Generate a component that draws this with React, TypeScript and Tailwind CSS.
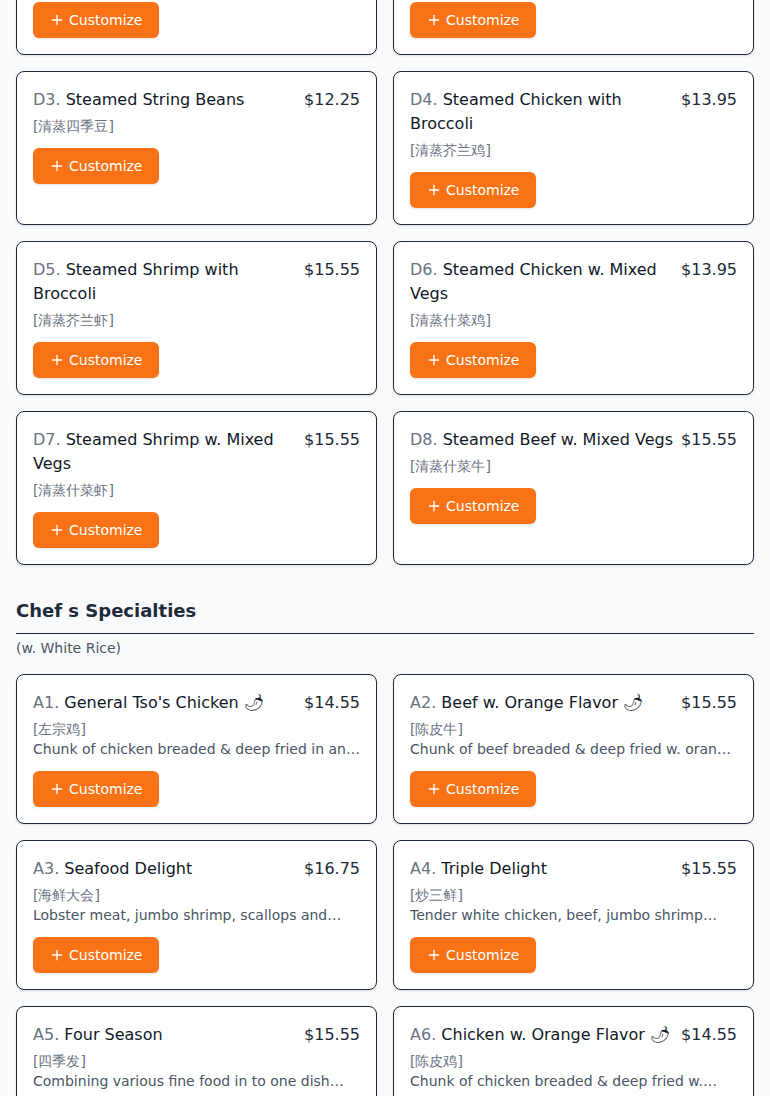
import React from "react";
import { Plus } from "lucide-react";

type Item = { code: string; name: string; price: string; zh: string; desc?: string };

const topRow: Item[] = [
  { code: "D1", name: "Steamed Mixed Vegs", price: "$11.95", zh: "清蒸什菜" },
  { code: "D2", name: "Steamed Broccoli", price: "$11.95", zh: "清蒸芥兰" },
];

const steamed: Item[] = [
  { code: "D3", name: "Steamed String Beans", price: "$12.25", zh: "清蒸四季豆" },
  { code: "D4", name: "Steamed Chicken with Broccoli", price: "$13.95", zh: "清蒸芥兰鸡" },
  { code: "D5", name: "Steamed Shrimp with Broccoli", price: "$15.55", zh: "清蒸芥兰虾" },
  { code: "D6", name: "Steamed Chicken w. Mixed Vegs", price: "$13.95", zh: "清蒸什菜鸡" },
  { code: "D7", name: "Steamed Shrimp w. Mixed Vegs", price: "$15.55", zh: "清蒸什菜虾" },
  { code: "D8", name: "Steamed Beef w. Mixed Vegs", price: "$15.55", zh: "清蒸什菜牛" },
];

const chef: Item[] = [
  {
    code: "A1",
    name: "General Tso's Chicken 🌶",
    price: "$14.55",
    zh: "左宗鸡",
    desc: "Chunk of chicken breaded & deep fried in an exquisite spicy sauce with broccoli",
  },
  {
    code: "A2",
    name: "Beef w. Orange Flavor 🌶",
    price: "$15.55",
    zh: "陈皮牛",
    desc: "Chunk of beef breaded & deep fried w. orange peel in a spicy sauce",
  },
  {
    code: "A3",
    name: "Seafood Delight",
    price: "$16.75",
    zh: "海鲜大会",
    desc: "Lobster meat, jumbo shrimp, scallops and crabmeat sautéed with mixed vegetables",
  },
  {
    code: "A4",
    name: "Triple Delight",
    price: "$15.55",
    zh: "炒三鲜",
    desc: "Tender white chicken, beef, jumbo shrimp sautéed with mixed vegetables",
  },
  {
    code: "A5",
    name: "Four Season",
    price: "$15.55",
    zh: "四季发",
    desc: "Combining various fine food in to one dish with brown sauce",
  },
  {
    code: "A6",
    name: "Chicken w. Orange Flavor 🌶",
    price: "$14.55",
    zh: "陈皮鸡",
    desc: "Chunk of chicken breaded & deep fried w. orange peel in spicy sauce",
  },
  {
    code: "A7",
    name: "Sesame Chicken",
    price: "$14.55",
    zh: "芝麻鸡",
    desc: "Chunk of chicken breaded & deep fried in sesame sauce",
  },
  {
    code: "A8",
    name: "Sesame Beef",
    price: "$15.55",
    zh: "芝麻牛",
    desc: "Chunk of beef breaded & deep fried in sesame sauce",
  },
];

function Card({ item }: { item: Item }) {
  return (
    <div className="rounded-lg border border-gray-800 bg-white p-4 shadow-sm">
      <div className="flex items-start justify-between gap-2">
        <div className="text-base leading-6 text-gray-900">
          <span className="text-gray-500">{item.code}.</span> {item.name}
        </div>
        <div className="shrink-0 text-base leading-6 text-gray-800">{item.price}</div>
      </div>
      <div className="mt-1 text-sm leading-5 text-gray-500">[{item.zh}]</div>
      {item.desc && (
        <div className="line-clamp-1 text-sm leading-5 text-gray-600">{item.desc}</div>
      )}
      <button className="mt-3 flex h-9 items-center gap-1 rounded-md bg-[#f97316] px-4 text-sm text-white shadow-sm">
        <Plus size={16} strokeWidth={2} />
        Customize
      </button>
    </div>
  );
}

export default function App() {
  return (
    <div
      className="min-h-screen overflow-hidden bg-gray-50 px-4 pb-8"
      style={{ fontFamily: '"DejaVu Sans", sans-serif' }}
    >
      <div className="mt-[-75px] grid grid-cols-2 gap-4">
        {topRow.map((it) => (
          <Card key={it.code} item={it} />
        ))}
      </div>
      <div className="mt-4 grid grid-cols-2 gap-4">
        {steamed.map((it) => (
          <Card key={it.code} item={it} />
        ))}
      </div>

      <section className="mt-8">
        <h2 className="border-b border-gray-800 pb-2 text-lg font-bold leading-7 text-gray-800">
          Chef s Specialties
        </h2>
        <p className="mt-1 text-sm leading-5 text-gray-600">(w. White Rice)</p>
        <div className="mt-4 grid grid-cols-2 gap-4">
          {chef.map((it) => (
            <Card key={it.code} item={it} />
          ))}
        </div>
      </section>
    </div>
  );
}
